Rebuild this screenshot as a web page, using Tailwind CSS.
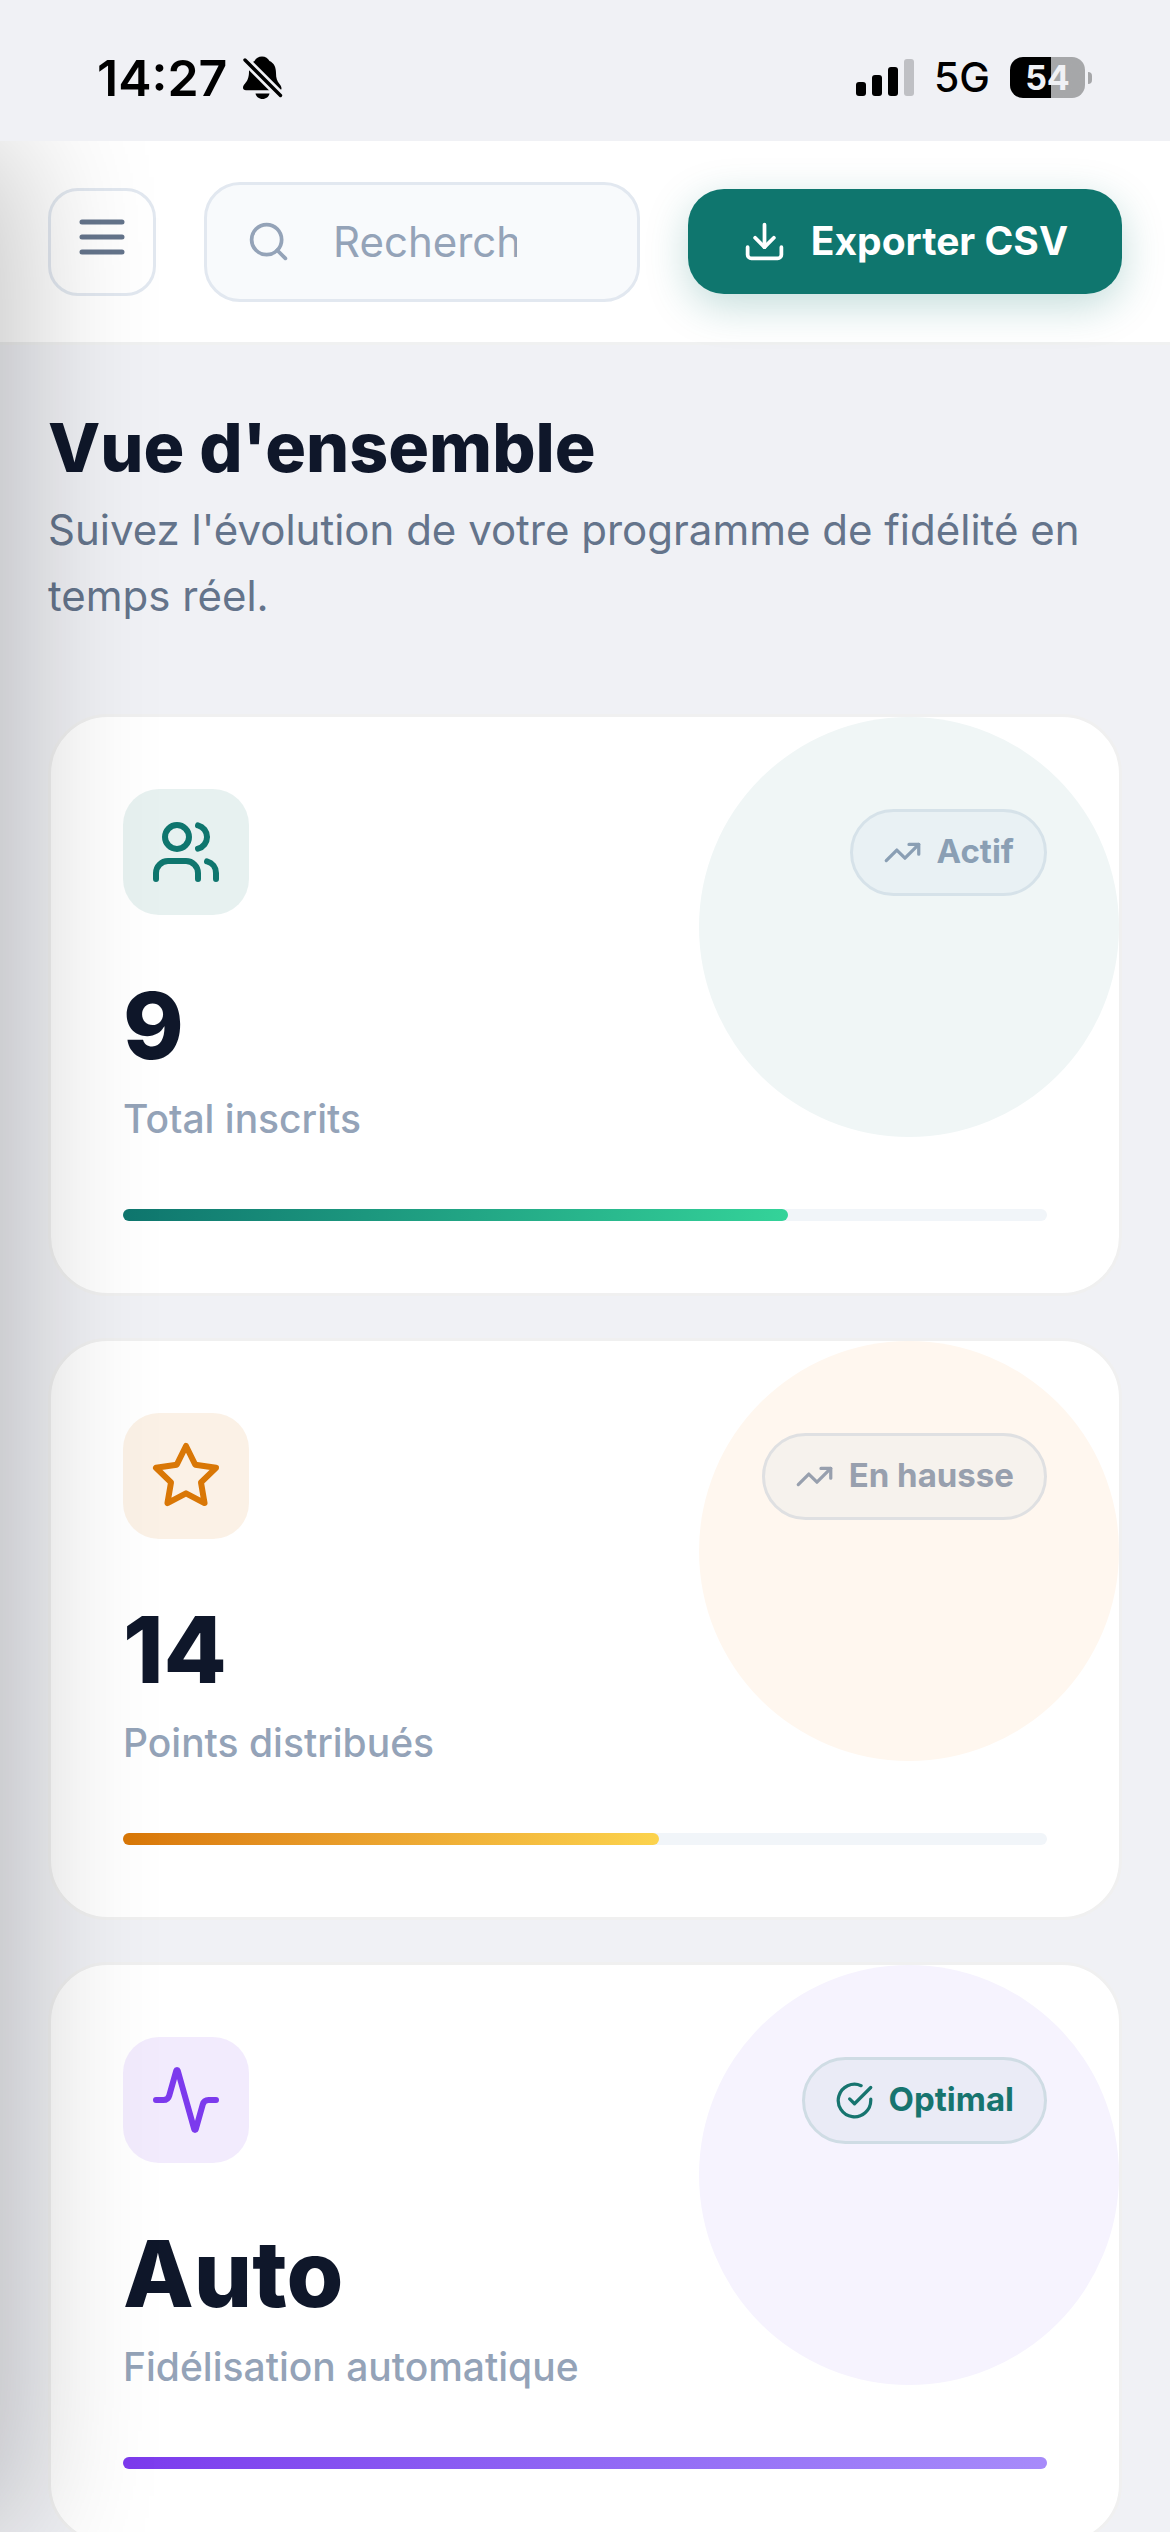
<!doctype html>
<html lang="fr">
    <head>
        <meta charset="UTF-8" />
        <meta name="viewport" content="width=device-width, initial-scale=1.0" />
        <title>Vue d'ensemble</title>
        <script src="https://cdn.jsdelivr.net/npm/@tailwindcss/browser@4"></script>
    </head>
    <body class="flex h-screen flex-col overflow-hidden bg-[#f0f1f5] font-['Inter',sans-serif] text-[#0f172a]">
        <!-- Status bar -->
        <div class="flex h-[141px] shrink-0 items-center justify-between pt-3.5 pr-[78px] pl-[97px] text-black">
            <div class="flex items-center gap-4">
                <span class="text-[50px] leading-none font-semibold">14:27</span>
                <svg class="h-11 w-10" viewBox="0 0 40 44" fill="currentColor">
                    <path
                        d="M19 .5c3.5 0 6 2 7.5 4.5C31 7 33 11 33 17c0 5 1 8 3.5 11 1.5 2 2 3 2 4.5 0 1-.7 1.8-2 1.8H3c-2 0-3-1-3-2.5 0-3 3-4.5 4.5-8C6 20 6 18 6 15c0-5 2-8 5.5-10C13 2 15.5.5 19 .5Z"
                    />
                    <path d="M12.5 37.5h14c-.7 3.2-3.5 5.500-7 5.500s-6.300-2.300-7-5.500Z" />
                    <path d="M-1 1 40 42" stroke="#f0f1f5" stroke-width="9" />
                    <path d="M2 4 37.5 39.5" stroke="currentColor" stroke-width="3.4" stroke-linecap="round" />
                </svg>
            </div>
            <div class="flex items-center gap-5">
                <svg class="h-[38px] w-[58px]" viewBox="0 0 58 38" fill="currentColor">
                    <rect x="0" y="23" width="10" height="14" rx="3" />
                    <rect x="16" y="16" width="10" height="21" rx="3" />
                    <rect x="32" y="8" width="10" height="29" rx="3" />
                    <rect x="48" y="0" width="10" height="37" rx="3" fill="#bfc0c4" />
                </svg>
                <span class="text-[41px] leading-none font-medium">5G</span>
                <div class="flex items-center gap-[3px]">
                    <div
                        class="flex h-[41px] w-[75px] items-center justify-center rounded-[13px] bg-linear-to-r from-black from-55% to-[#a6a7a9] to-55% text-[34px] leading-none font-bold text-[#f0f1f5]"
                    >
                        54
                    </div>
                    <div class="h-3 w-1 rounded-r-full bg-[#a6a7a9]"></div>
                </div>
            </div>
        </div>

        <div class="relative flex min-h-0 flex-1 flex-col overflow-hidden">
            <!-- Closed drawer, only its shadow reaches the page -->
            <aside class="absolute inset-y-0 right-full z-20 w-[780px] bg-white shadow-[18px_0_130px_rgba(0,0,0,0.24)]"></aside>

            <header class="flex h-[204px] shrink-0 items-center gap-12 border-b-3 border-[#f0f1f1] bg-white px-12">
                <button
                    type="button"
                    aria-label="Menu"
                    class="flex size-[108px] shrink-0 items-center justify-center rounded-[30px] border-3 border-[#e2e8f0] pb-2.5 text-[#64748b]"
                >
                    <svg class="size-[60px]" viewBox="0 0 24 24" fill="none" stroke="currentColor" stroke-width="2" stroke-linecap="round">
                        <path d="M4 6h16M4 12h16M4 18h16" />
                    </svg>
                </button>
                <label
                    class="flex h-[120px] min-w-0 flex-1 items-center gap-[42px] rounded-[36px] border-3 border-[#e2e8f0] bg-[#f8fafc] pr-[120px] pl-[39px]"
                >
                    <svg
                        class="size-[45px] shrink-0 text-[#94a3b8]"
                        viewBox="0 0 24 24"
                        fill="none"
                        stroke="currentColor"
                        stroke-width="2"
                        stroke-linecap="round"
                    >
                        <circle cx="11" cy="11" r="8" />
                        <path d="m21 21-4.35-4.35" />
                    </svg>
                    <input
                        type="text"
                        aria-label="Rechercher"
                        placeholder="Rechercher..."
                        class="w-full min-w-0 bg-transparent text-[42px] outline-none placeholder:text-[#94a3b8]"
                    />
                </label>
                <button
                    type="button"
                    class="flex h-[105px] shrink-0 items-center gap-6 rounded-[36px] bg-[#0f766e] px-[54px] text-[39px] font-bold text-white shadow-[0_12px_42px_rgba(15,118,110,0.25)]"
                >
                    <svg
                        class="size-[45px]"
                        viewBox="0 0 24 24"
                        fill="none"
                        stroke="currentColor"
                        stroke-width="2"
                        stroke-linecap="round"
                        stroke-linejoin="round"
                    >
                        <path d="M21 15v4a2 2 0 0 1-2 2H5a2 2 0 0 1-2-2v-4" />
                        <path d="m7 10 5 5 5-5" />
                        <path d="M12 15V3" />
                    </svg>
                    Exporter CSV
                </button>
            </header>

            <main class="min-h-0 flex-1 overflow-hidden px-12 pt-[60px]">
                <h1 class="text-[68px] leading-[84px] font-extrabold">Vue d'ensemble</h1>
                <p class="mt-2 text-[42px] leading-[66px] text-[#64748b]">
                    Suivez l'évolution de votre programme de fidélité en temps réel.
                </p>

                <div class="mt-[85px] flex flex-col gap-[42px]">
                    <section class="relative overflow-hidden rounded-[60px] border-3 border-[#f0f0f0] bg-white p-[72px]">
                        <div class="absolute top-0 right-0 size-[420px] rounded-full bg-[#f0f6f6]"></div>
                        <div class="relative flex items-center justify-between">
                            <div class="flex size-[126px] items-center justify-center rounded-[36px] bg-[#0f766e]/10 text-[#0f766e]">
                                <svg
                                    class="size-[72px]"
                                    viewBox="0 0 24 24"
                                    fill="none"
                                    stroke="currentColor"
                                    stroke-width="2"
                                    stroke-linecap="round"
                                    stroke-linejoin="round"
                                >
                                    <path d="M16 21v-2a4 4 0 0 0-4-4H6a4 4 0 0 0-4 4v2" />
                                    <circle cx="9" cy="7" r="4" />
                                    <path d="M22 21v-2a4 4 0 0 0-3-3.87" />
                                    <path d="M16 3.13a4 4 0 0 1 0 7.75" />
                                </svg>
                            </div>
                            <span
                                class="flex h-[87px] items-center gap-[15px] rounded-full border-3 border-[#d6e2e9] bg-[#e9f1f4] px-[30px] text-[33px] font-bold text-[#8a9fb4]"
                            >
                                <svg
                                    class="size-[39px]"
                                    viewBox="0 0 24 24"
                                    fill="none"
                                    stroke="currentColor"
                                    stroke-width="2"
                                    stroke-linecap="round"
                                    stroke-linejoin="round"
                                >
                                    <path d="m22 7-8.5 8.5-5-5L2 17" />
                                    <path d="M16 7h6v6" />
                                </svg>
                                Actif
                            </span>
                        </div>
                        <p class="relative mt-[63px] text-[92px] leading-[96px] font-extrabold">9</p>
                        <p class="relative mt-[15px] text-[39px] leading-[60px] font-medium text-[#94a3b8]">Total inscrits</p>
                        <div class="relative mt-[60px] h-3 rounded-full bg-[#f1f5f9]">
                            <div class="h-full rounded-full bg-linear-to-r from-[#0f766e] to-[#34d399]" style="width: 72%"></div>
                        </div>
                    </section>

                    <section class="relative overflow-hidden rounded-[60px] border-3 border-[#f0f0f0] bg-white p-[72px]">
                        <div class="absolute top-0 right-0 size-[420px] rounded-full bg-[#fff7ef]"></div>
                        <div class="relative flex items-center justify-between">
                            <div class="flex size-[126px] items-center justify-center rounded-[36px] bg-[#d97706]/10 text-[#d97706]">
                                <svg
                                    class="size-[72px]"
                                    viewBox="0 0 24 24"
                                    fill="none"
                                    stroke="currentColor"
                                    stroke-width="2"
                                    stroke-linecap="round"
                                    stroke-linejoin="round"
                                >
                                    <path
                                        d="m12 2 3.09 6.26L22 9.27l-5 4.87 1.18 6.88L12 17.77l-6.18 3.25L7 14.14 2 9.27l6.91-1.01L12 2Z"
                                    />
                                </svg>
                            </div>
                            <span
                                class="flex h-[87px] items-center gap-[15px] rounded-full border-3 border-[#dfe0e2] bg-[#f6f2ed] px-[30px] text-[33px] font-bold text-[#98a0ae]"
                            >
                                <svg
                                    class="size-[39px]"
                                    viewBox="0 0 24 24"
                                    fill="none"
                                    stroke="currentColor"
                                    stroke-width="2"
                                    stroke-linecap="round"
                                    stroke-linejoin="round"
                                >
                                    <path d="m22 7-8.5 8.5-5-5L2 17" />
                                    <path d="M16 7h6v6" />
                                </svg>
                                En hausse
                            </span>
                        </div>
                        <p class="relative mt-[63px] text-[92px] leading-[96px] font-extrabold">14</p>
                        <p class="relative mt-[15px] text-[39px] leading-[60px] font-medium text-[#94a3b8]">Points distribués</p>
                        <div class="relative mt-[60px] h-3 rounded-full bg-[#f1f5f9]">
                            <div class="h-full rounded-full bg-linear-to-r from-[#d97706] to-[#fcd34d]" style="width: 58%"></div>
                        </div>
                    </section>

                    <section class="relative overflow-hidden rounded-[60px] border-3 border-[#f0f0f0] bg-white p-[72px]">
                        <div class="absolute top-0 right-0 size-[420px] rounded-full bg-[#f6f3fe]"></div>
                        <div class="relative flex items-center justify-between">
                            <div class="flex size-[126px] items-center justify-center rounded-[36px] bg-[#7c3aed]/10 text-[#7c3aed]">
                                <svg
                                    class="size-[72px]"
                                    viewBox="0 0 24 24"
                                    fill="none"
                                    stroke="currentColor"
                                    stroke-width="2"
                                    stroke-linecap="round"
                                    stroke-linejoin="round"
                                >
                                    <path
                                        d="M22 12h-2.48a2 2 0 0 0-1.93 1.46l-2.35 8.36a.25.25 0 0 1-.48 0L9.24 2.18a.25.25 0 0 0-.48 0l-2.35 8.36A2 2 0 0 1 4.49 12H2"
                                    />
                                </svg>
                            </div>
                            <span
                                class="flex h-[87px] items-center gap-[15px] rounded-full border-3 border-[#cfdce4] bg-[#eaebf6] px-[30px] text-[33px] font-bold text-[#17746f]"
                            >
                                <svg
                                    class="size-[39px]"
                                    viewBox="0 0 24 24"
                                    fill="none"
                                    stroke="currentColor"
                                    stroke-width="2"
                                    stroke-linecap="round"
                                    stroke-linejoin="round"
                                >
                                    <path d="M22 11.08V12a10 10 0 1 1-5.93-9.14" />
                                    <path d="M22 4 12 14.01l-3-3" />
                                </svg>
                                Optimal
                            </span>
                        </div>
                        <p class="relative mt-[63px] text-[92px] leading-[96px] font-extrabold">Auto</p>
                        <p class="relative mt-[15px] text-[39px] leading-[60px] font-medium text-[#94a3b8]">Fidélisation automatique</p>
                        <div class="relative mt-[60px] h-3 rounded-full bg-[#f1f5f9]">
                            <div class="h-full rounded-full bg-linear-to-r from-[#7c3aed] to-[#a78bfa]" style="width: 100%"></div>
                        </div>
                    </section>
                </div>
            </main>
        </div>
    </body>
</html>
